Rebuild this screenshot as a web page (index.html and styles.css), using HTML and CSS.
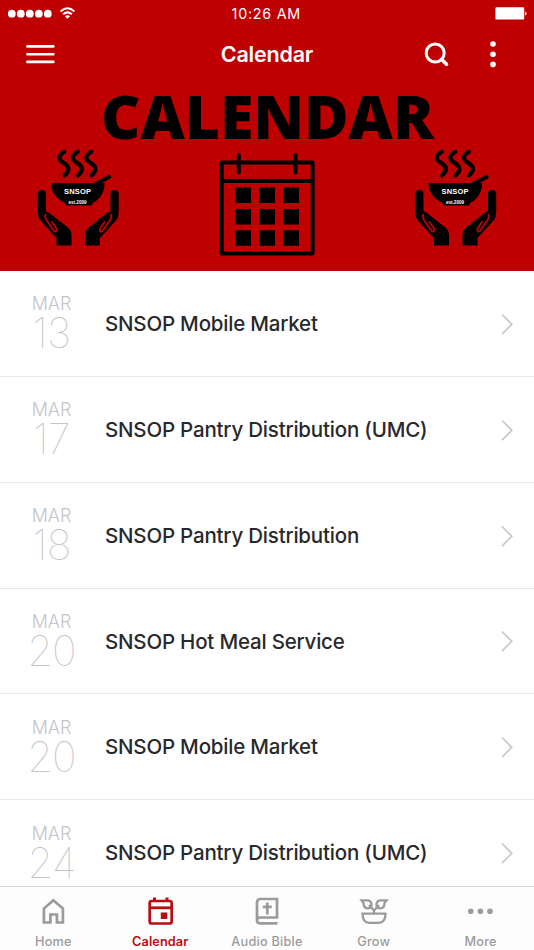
FILE: index.html
```html
<!DOCTYPE html>
<html lang="en">
<head>
<meta charset="utf-8">
<title>Calendar</title>
<link rel="stylesheet" href="styles.css">
</head>
<body>
<div class="app">
  <header class="top">
    <div class="status">
      <svg class="signal" width="80" height="27" viewBox="0 0 80 27" fill="#fff">
        <circle cx="11.8" cy="13.7" r="3.9"/><circle cx="20.8" cy="13.7" r="3.9"/><circle cx="29.8" cy="13.7" r="3.9"/><circle cx="38.8" cy="13.7" r="3.9"/><circle cx="47.8" cy="13.7" r="3.9"/>
        <g fill="none" stroke="#fff" stroke-width="2"><path d="M60.6 11.4Q67.5 5.2 74.4 11.4"/><path d="M63.1 14.3Q67.5 10.4 71.9 14.3"/></g>
        <path d="M64.9 16.2Q67.5 14.2 70.1 16.2L67.5 18.8Z"/>
      </svg>
      <span class="clock">10:26 AM</span>
      <svg class="battery" width="40" height="27" viewBox="0 0 40 27" fill="#fff"><rect x="1.4" y="7.2" width="28.8" height="12.4" rx="1.2"/><path d="M31 11.4q1.6.4 1.6 2t-1.6 2z"/></svg>
    </div>
    <nav class="navbar">
      <svg class="menu" width="30" height="24" viewBox="0 0 30 24" stroke="#fff" stroke-width="2.6" stroke-linecap="round"><path d="M2.400 4.400h26M2.400 12.200h26M2.400 19.900h26"/></svg>
      <h1 class="title">Calendar</h1>
      <div class="actions">
        <svg width="28" height="28" viewBox="0 0 28 28" fill="none" stroke="#fff" stroke-width="3"><circle cx="13.2" cy="13" r="9"/><path d="M19.5 19.3l5 5" stroke-width="3.6" stroke-linecap="round"/></svg>
        <svg width="8" height="28" viewBox="0 0 8 28" fill="#fff"><circle cx="4" cy="4" r="2.8"/><circle cx="4" cy="14.2" r="2.8"/><circle cx="4" cy="24.4" r="2.8"/></svg>
      </div>
    </nav>
    <svg class="banner" width="534" height="190" viewBox="0 81 534 190">
      <defs>
        <g id="bowl">
          <g fill="none" stroke="#000" stroke-width="4.200" stroke-linecap="round">
            <path id="steam" d="M44.300 11.800C36.500 17 39 20 44 23S50.500 30.500 44.500 35.300"/>
            <use href="#steam" x="13.500"/><use href="#steam" x="27"/>
            <path d="M74 45L89 37"/>
          </g>
          <path d="M31 43H84.500C85 53 78 61 73 62.500L71.500 65.500H46.500L44.500 62.500C38 60 31 53 31 43Z"/>
          <g id="hand">
            <path d="M17.800 54a4.100 4.100 0 0 1 8.200 0V71.500Q28.500 71.500 32 75L48.500 88Q51.500 91 51.500 94V105.500H36.500V98L20 80Q17.800 77 17.800 72Z"/>
            <path class="gap" d="M25.700 74.500Q24.300 77 26.500 80.200L34.500 91.500Q37.500 92.500 36.500 88.500L32 82"/>
          </g>
          <use href="#hand" transform="translate(116.500 0) scale(-1 1)"/>
          <text x="57.500" y="54" class="bowl-name" textLength="27">SNSOP</text>
          <text x="57.500" y="63.800" class="bowl-est" textLength="18" lengthAdjust="spacingAndGlyphs">est.2009</text>
        </g>
      </defs>
      <text class="banner-title" x="101" y="139.300" textLength="333">CALENDAR</text>
      <use href="#bowl" x="20" y="140"/>
      <use href="#bowl" x="397.500" y="140"/>
      <g fill="none" stroke="#000" stroke-width="4"><rect x="221.700" y="162.500" width="91" height="91" rx="1"/><path d="M222 181h91"/><path d="M238.800 155v17.500M295.500 155v17.500" stroke-linecap="round"/></g>
      <path d="M235.500 187.500h15.500v15.500h-15.500zm24 0h15.500v15.500h-15.500zm24 0h15.500v15.500h-15.500zm-48 21.500h15.500v15.500h-15.500zm24 0h15.500v15.500h-15.500zm24 0h15.500v15.500h-15.500zm-48 21.200h15.500v15.500h-15.500zm24 0h15.500v15.500h-15.500zm24 0h15.500v15.500h-15.500z"/>
    </svg>
  </header>
  <main class="events">
    <article class="event"><div class="date"><span class="month">MAR</span><span class="day">13</span></div><span class="name">SNSOP Mobile Market</span><svg class="chevron" viewBox="0 0 14 24"><path d="M2 2.500L11.800 12.300L2 22.100"/></svg></article>
    <article class="event"><div class="date"><span class="month">MAR</span><span class="day">17</span></div><span class="name">SNSOP Pantry Distribution (UMC)</span><svg class="chevron" viewBox="0 0 14 24"><path d="M2 2.500L11.800 12.300L2 22.100"/></svg></article>
    <article class="event"><div class="date"><span class="month">MAR</span><span class="day">18</span></div><span class="name">SNSOP Pantry Distribution</span><svg class="chevron" viewBox="0 0 14 24"><path d="M2 2.500L11.800 12.300L2 22.100"/></svg></article>
    <article class="event"><div class="date"><span class="month">MAR</span><span class="day">20</span></div><span class="name">SNSOP Hot Meal Service</span><svg class="chevron" viewBox="0 0 14 24"><path d="M2 2.500L11.800 12.300L2 22.100"/></svg></article>
    <article class="event"><div class="date"><span class="month">MAR</span><span class="day">20</span></div><span class="name">SNSOP Mobile Market</span><svg class="chevron" viewBox="0 0 14 24"><path d="M2 2.500L11.800 12.300L2 22.100"/></svg></article>
    <article class="event"><div class="date"><span class="month">MAR</span><span class="day">24</span></div><span class="name">SNSOP Pantry Distribution (UMC)</span><svg class="chevron" viewBox="0 0 14 24"><path d="M2 2.500L11.800 12.300L2 22.100"/></svg></article>
  </main>
  <footer class="tabs">
    <a class="tab"><svg viewBox="0 0 32 30"><path d="M6.900 26.500V12.500L16.400 4.300L25.900 12.500V26.500H19.900V18.500H13.400V26.500Z"/></svg><span>Home</span></a>
    <a class="tab active"><svg viewBox="0 0 32 30"><rect x="5.700" y="5" width="22" height="22.500" rx="2"/><path d="M5 11.800h23" stroke-width="2.800"/><path d="M10.500 1.500v4M23 1.500v4" stroke-width="3"/><rect class="solid" x="16.800" y="16.500" width="6.500" height="6.500"/></svg><span>Calendar</span></a>
    <a class="tab"><svg viewBox="0 0 32 30"><path d="M26.500 27.300H9Q6 27.300 6 24V6.500Q6 3 9.500 3H26V21.500H9Q6 21.500 6 24.500"/><path d="M16.300 6.500v12M11.800 10.800h9"/></svg><span>Audio Bible</span></a>
    <a class="tab"><svg viewBox="0 0 32 30"><path d="M4.500 17.700H27.500Q27.500 26.800 20.500 26.800H11.500Q4.500 26.800 4.500 17.700ZM16 17V14.500M16 14.500L11 9M16 14.500L21 9M3.500 4.300H10Q13.800 5 13.500 9.500Q13 12.500 9.500 12.300Q5.500 12 5.500 7ZM28.500 4.300H22Q18.200 5 18.500 9.500Q19 12.500 22.500 12.300Q26.500 12 26.500 7Z" stroke-width="2.300"/></svg><span>Grow</span></a>
    <a class="tab"><svg viewBox="0 0 32 30"><g class="solid"><circle cx="5.800" cy="15.300" r="2.800"/><circle cx="15.400" cy="15.300" r="2.800"/><circle cx="25" cy="15.300" r="2.800"/></g></svg><span>More</span></a>
  </footer>
</div>
</body>
</html>
```
FILE: styles.css
```css
* { box-sizing: border-box; }
body { margin: 0; font-family: Inter, "Liberation Sans", sans-serif; background: #fff; }
svg { display: block; flex: none; }
.app { width: 534px; height: 950px; display: flex; flex-direction: column; overflow: hidden; }
.top { height: 271px; flex: none; background: #bf0000; color: #fff; }
.status { height: 27px; display: grid; grid-template-columns: 1fr auto 1fr; align-items: center; }
.clock { font-size: 14.3px; letter-spacing: 0.75px; padding: 0 1.5px 0 0; }
.battery { justify-self: end; }
.navbar { height: 54px; display: grid; grid-template-columns: 1fr auto 1fr; align-items: center; padding: 0 37px 0 25px; }
.title { margin: 0; padding-left: 12px; font-size: 21.5px; line-height: 26px; font-weight: 600; letter-spacing: -0.2px; }
.actions { justify-self: end; display: flex; gap: 39px; }
.banner-title { font: 800 61px "Open Sans", sans-serif; }
.bowl-name { font: 700 7.5px "Liberation Sans", sans-serif; fill: #fff; text-anchor: middle; }
.bowl-est { font: 700 4.5px "Liberation Sans", sans-serif; fill: #fff; text-anchor: middle; }
.gap { fill: none; stroke: #bf0000; stroke-width: 1.8; stroke-linecap: round; }
.events { flex: 1; overflow: hidden; }
.event { height: 105.85px; display: flex; align-items: center; border-bottom: 1.5px solid #e9e9eb; padding-right: 20.5px; }
.date { width: 105px; padding: 0 2px 1px 0; display: flex; flex-direction: column; align-items: center; color: #c4c4c9; }
.month { font-size: 18px; line-height: 22px; font-weight: 300; letter-spacing: -0.1px; }
.day { font-size: 41.5px; line-height: 37px; font-weight: 100; letter-spacing: -0.8px; }
.name { flex: 1; padding-top: 1.3px; font-size: 20.5px; line-height: 26px; font-weight: 480; letter-spacing: -0.2px; color: #29292b; }
.chevron { width: 14px; height: 24px; margin-top: 1px; fill: none; stroke: #c7c7cc; stroke-width: 1.7; }
.tabs { height: 64px; flex: none; display: grid; grid-template-columns: repeat(5, 1fr); border-top: 1.5px solid #d8d8da; background: #fdfdfd; }
.tab { display: flex; flex-direction: column; align-items: center; padding-top: 9px; color: #9b9b9b; font-size: 12.7px; line-height: 18px; font-weight: 500; letter-spacing: 0.25px; }
.tab svg { width: 32px; height: 30px; margin-bottom: 7px; fill: none; stroke: currentColor; stroke-width: 2.7; }
.tab .solid { fill: currentColor; stroke: none; }
.tab.active { color: #b80d10; font-weight: 600; letter-spacing: 0.1px; }
```
